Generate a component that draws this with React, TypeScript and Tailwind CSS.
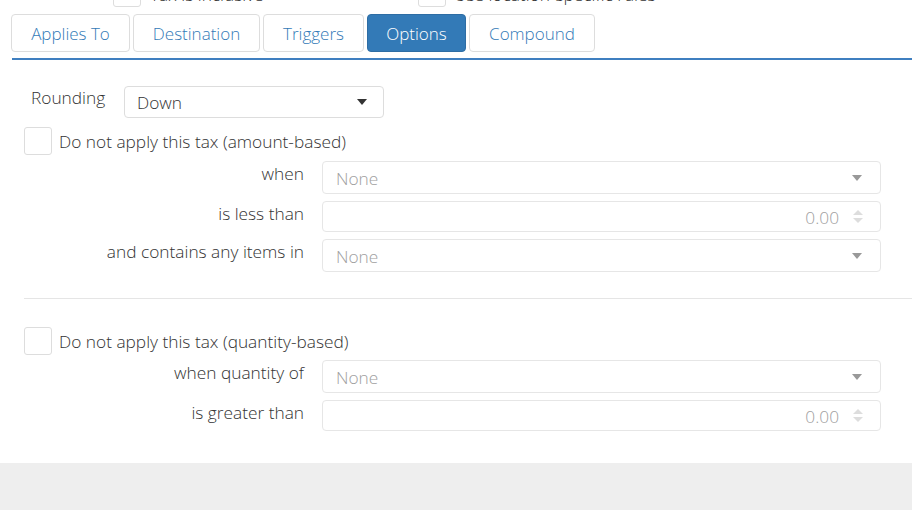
import React from "react";

const font = { fontFamily: '"Open Sans", "Noto Sans", Arial, sans-serif' };

function Caret({ color = "#555" }: { color?: string }) {
  return (
    <svg width="10" height="6" viewBox="0 0 10 6">
      <path d="M0 0 L10 0 L5 6 Z" fill={color} />
    </svg>
  );
}

function Spinner() {
  return (
    <div className="flex flex-col gap-[3px]">
      <svg width="10" height="5" viewBox="0 0 10 5">
        <path d="M0 5 L10 5 L5 0 Z" fill="#ddd" />
      </svg>
      <svg width="10" height="5" viewBox="0 0 10 5">
        <path d="M0 0 L10 0 L5 5 Z" fill="#ddd" />
      </svg>
    </div>
  );
}

function DisabledSelect() {
  return (
    <div className="flex h-[33px] flex-1 items-center justify-between rounded-[4px] border border-[#e6e6e6] bg-white pl-[13px] pr-[18px]">
      <span className="pt-[3px] text-[#a0a0a0]">None</span>
      <Caret color="#999" />
    </div>
  );
}

function DisabledNumber() {
  return (
    <div className="flex h-[31px] flex-1 items-center justify-end gap-[14px] rounded-[4px] border border-[#e6e6e6] bg-white pr-[17px]">
      <span className="pt-[3px] text-[#a0a0a0]">0.00</span>
      <Spinner />
    </div>
  );
}

function Row({ label, children, mt }: { label: string; children: React.ReactNode; mt: string }) {
  return (
    <div className={`flex items-start ${mt}`}>
      <div className="w-[280px] whitespace-nowrap pt-[2px] text-right text-[#333]">{label}</div>
      <div className="ml-[18px] flex flex-1">{children}</div>
    </div>
  );
}

function Check({ label }: { label: string }) {
  return (
    <div className="flex items-center">
      <div className="h-[28px] w-[28px] shrink-0 rounded-[3px] border border-[#ddd] bg-white" />
      <span className="ml-[7px] pt-[1px] text-[#333]">{label}</span>
    </div>
  );
}

export default function App() {
  const tabs = ["Applies To", "Destination", "Triggers", "Options", "Compound"];
  const widths = ["w-[119px]", "w-[127px]", "w-[101px]", "w-[99px]", "w-[126px]"];
  return (
    <div style={font} className="h-[510px] w-[912px] overflow-hidden bg-white text-[17.3px] font-[350] leading-[22px]">
      <div className="mt-[-21px] flex h-[28px] items-start">
        <div className="ml-[113px] h-[28px] w-[28px] rounded-[3px] border border-[#ddd]" />
        <span className="ml-[9px] w-[268px] whitespace-nowrap pt-[5px] text-[#333]">Tax is inclusive</span>
        <div className="h-[28px] w-[28px] rounded-[3px] border border-[#ddd]" />
        <span className="ml-[8px] whitespace-nowrap pt-[5px] text-[#333]">Use location-specific rules</span>
      </div>
      <div className="ml-[11px] mt-[7px] flex gap-[3px]">
        {tabs.map((t, i) => (
          <div
            key={t}
            className={`flex h-[38px] items-center justify-center rounded-[4px] border pt-[1px] text-[17px] ${widths[i]} ${
              t === "Options"
                ? "border-[#2e6da4] bg-[#337ab7] text-white"
                : "border-[#ddd] bg-white text-[#337ab7]"
            }`}
          >
            {t}
          </div>
        ))}
      </div>
      <div className="ml-[12px] mt-[6px] h-[2px] bg-[#3f7fc0]" />
      <div className="pl-[24px] pr-[31px]">
        <div className="mt-[26px] flex items-start">
          <span className="ml-[7px] mt-[1px] w-[93px] text-[#333]">Rounding</span>
          <div className="flex h-[32px] w-[260px] items-center justify-between rounded-[4px] border border-[#ddd] pl-[12px] pr-[16px]">
            <span className="pt-[2px] text-[#333]">Down</span>
            <Caret color="#333" />
          </div>
        </div>
        <div className="mt-[9px]">
          <Check label="Do not apply this tax (amount-based)" />
        </div>
        <Row label="when" mt="mt-[6px]">
          <DisabledSelect />
        </Row>
        <Row label="is less than" mt="mt-[7px]">
          <DisabledNumber />
        </Row>
        <Row label="and contains any items in" mt="mt-[7px]">
          <DisabledSelect />
        </Row>
      </div>
      <div className="ml-[24px] mt-[26px] h-[1px] bg-[#e5e5e5]" />
      <div className="pl-[24px] pr-[31px]">
        <div className="mt-[28px]">
          <Check label="Do not apply this tax (quantity-based)" />
        </div>
        <Row label="when quantity of" mt="mt-[5px]">
          <DisabledSelect />
        </Row>
        <Row label="is greater than" mt="mt-[7px]">
          <DisabledNumber />
        </Row>
      </div>
      <div className="mt-[32px] h-[60px] bg-[#eeeeee]" />
    </div>
  );
}
